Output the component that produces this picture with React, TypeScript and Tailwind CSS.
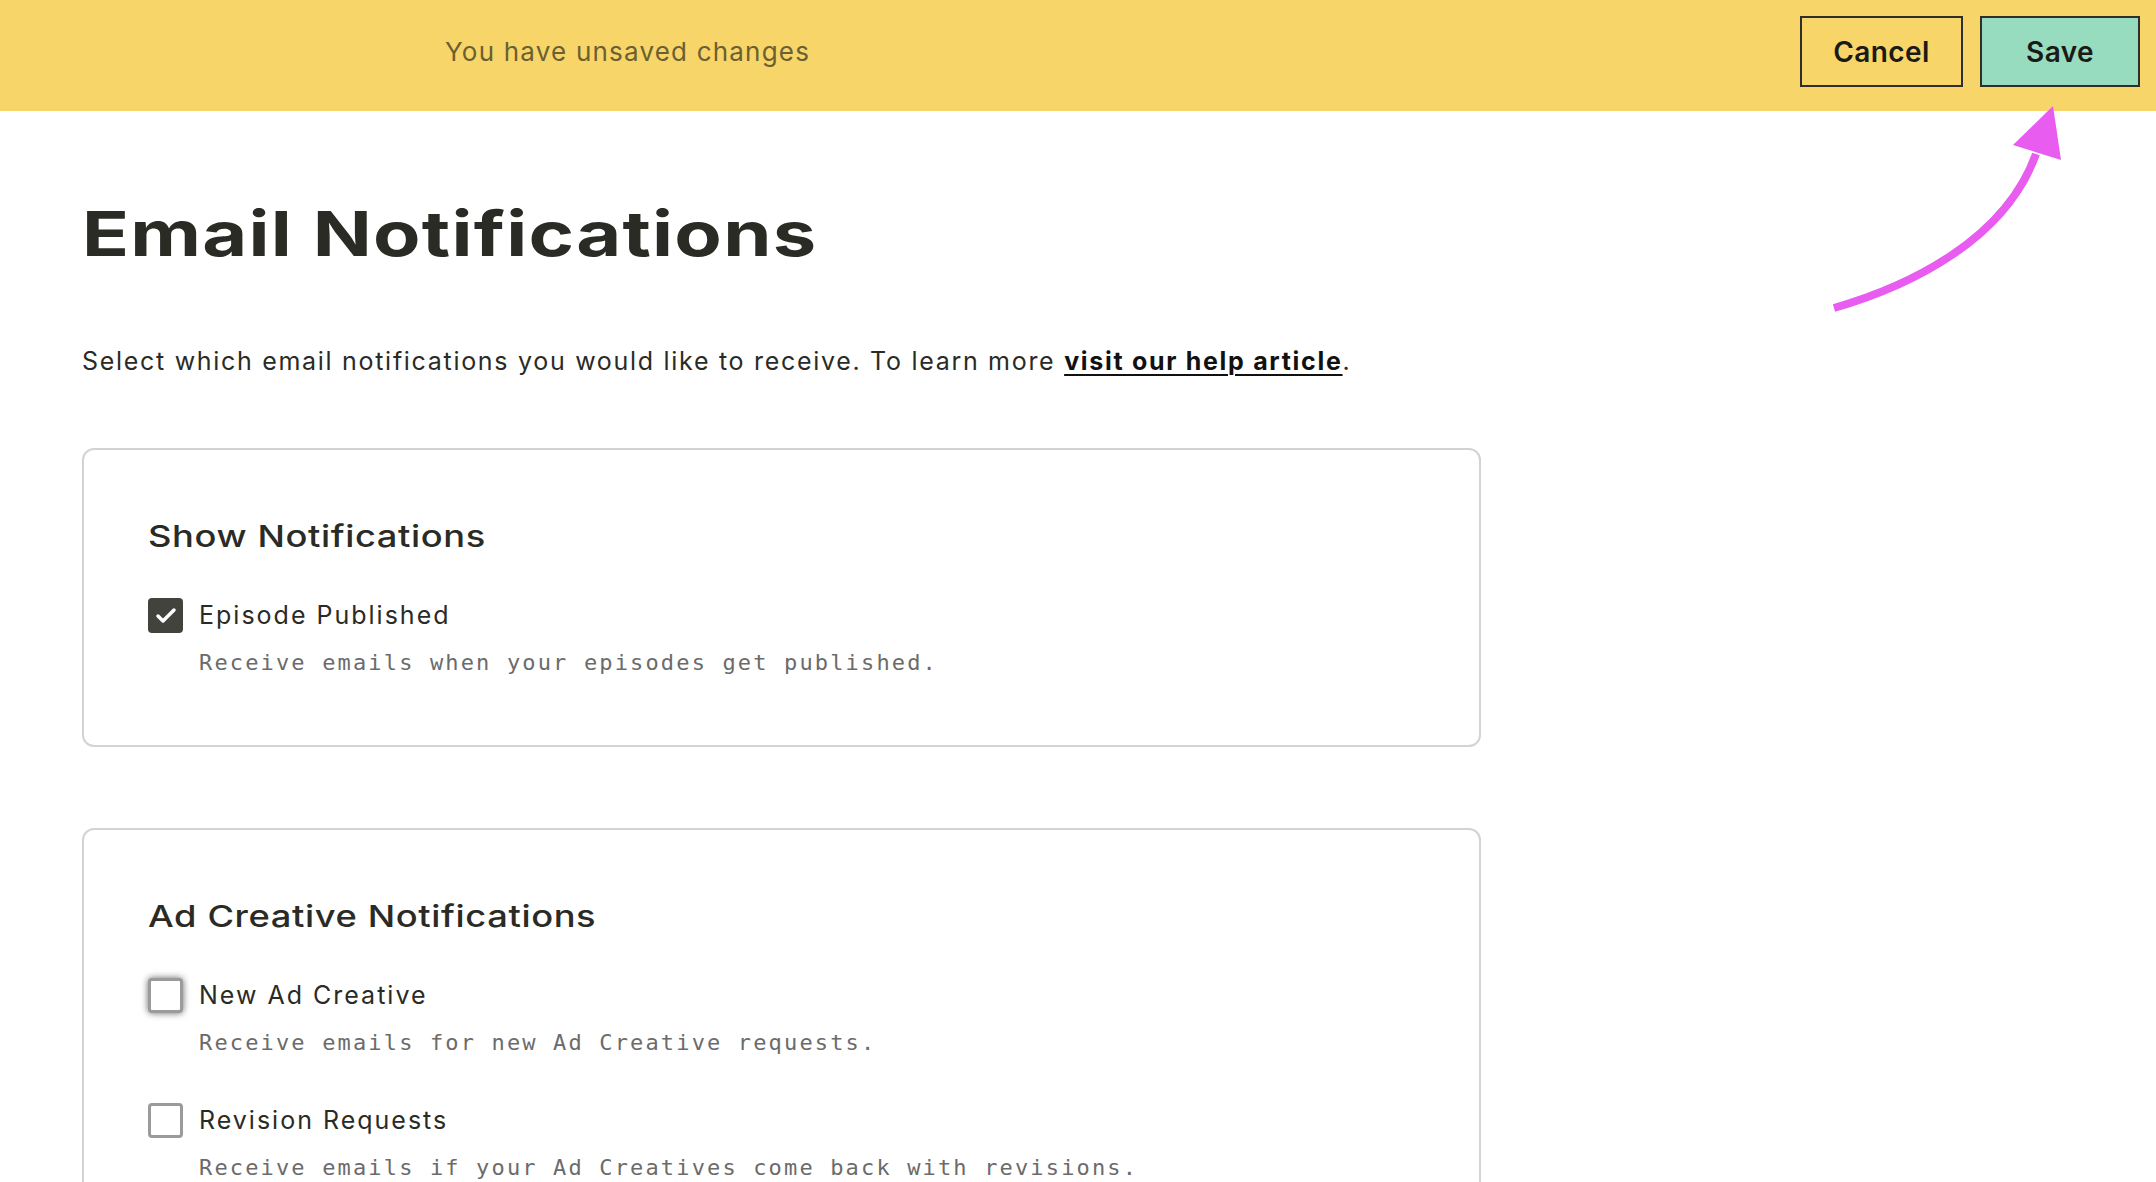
import { Check } from "lucide-react";

type Item = {
  label: string;
  description: string;
  checked: boolean;
  focused?: boolean;
};

type Section = {
  title: string;
  items: Item[];
};

const sections: Section[] = [
  {
    title: "Show Notifications",
    items: [
      {
        label: "Episode Published",
        description: "Receive emails when your episodes get published.",
        checked: true,
      },
    ],
  },
  {
    title: "Ad Creative Notifications",
    items: [
      {
        label: "New Ad Creative",
        description: "Receive emails for new Ad Creative requests.",
        checked: false,
        focused: true,
      },
      {
        label: "Revision Requests",
        description: "Receive emails if your Ad Creatives come back with revisions.",
        checked: false,
      },
    ],
  },
];

function Checkbox({ checked, focused }: { checked: boolean; focused?: boolean }) {
  if (checked) {
    return (
      <span className="flex h-[35px] w-[35px] shrink-0 items-center justify-center rounded-[4px] bg-[#43433e]">
        <Check size={24} strokeWidth={3.5} className="text-white" />
      </span>
    );
  }
  return (
    <span
      className={
        "h-[35px] w-[35px] shrink-0 rounded-[4px] border-[3px] border-[#9b9b9b] bg-white" +
        (focused ? " shadow-[0_0_7px_rgba(0,0,0,0.6)]" : "")
      }
    />
  );
}

function SaveArrow() {
  return (
    <svg
      className="pointer-events-none absolute left-[1800px] top-[90px]"
      width="300"
      height="240"
      viewBox="0 0 300 240"
      fill="none"
    >
      <path d="M34 218 C110 196 205 150 236 64" stroke="#e85cf0" strokeWidth="8" />
      <polygon points="253,16 213,55 261,70" fill="#e85cf0" />
    </svg>
  );
}

export default function App() {
  return (
    <div className="relative min-h-screen overflow-hidden bg-white font-['Inter',sans-serif] text-[#2b2b26]">
      <header className="flex h-[111px] items-start bg-[#f8d568] pl-[445px] pr-[16px] pt-[16px]">
        <div className="flex h-[71px] flex-1 items-center">
          <span className="text-[26px] tracking-[1.2px] text-[#6b6032]">You have unsaved changes</span>
        </div>
        <div className="flex gap-[17px]">
          <button className="h-[71px] w-[163px] border-2 border-[#2e2e2a] text-[28px] font-semibold tracking-[0.4px] text-[#1a1a17]">
            Cancel
          </button>
          <button className="h-[71px] w-[160px] border-2 border-[#2e2e2a] bg-[#98dcbf] text-[28px] font-semibold tracking-[0.4px] text-[#1a1a17]">
            Save
          </button>
        </div>
      </header>

      <main className="px-[82px] pt-[92px]">
        <h1 className="origin-left scale-x-[1.25] text-[62px] font-bold leading-[62px] tracking-[1px]">
          Email Notifications
        </h1>

        <p className="mt-[80px] text-[25px] leading-[32px] tracking-[1.7px]">
          Select which email notifications you would like to receive. To learn more{" "}
          <a href="#" className="font-bold text-[#111] underline decoration-2 underline-offset-4">
            visit our help article
          </a>
          .
        </p>

        <div className="mt-[71px] flex w-[1399px] flex-col gap-[81px]">
          {sections.map((section) => (
            <section
              key={section.title}
              className="rounded-[12px] border-2 border-[#d3d3d3] px-[64px] pb-[68px] pt-[68px]"
            >
              <h2 className="origin-left scale-x-[1.21] text-[30px] font-medium leading-[36px] tracking-[0.5px]">
                {section.title}
              </h2>
              <div className="mt-[44px] flex flex-col gap-[46px]">
                {section.items.map((item) => (
                  <div key={item.label}>
                    <label className="flex items-center gap-[16px]">
                      <Checkbox checked={item.checked} focused={item.focused} />
                      <span className="text-[25px] leading-[35px] tracking-[2px]">{item.label}</span>
                    </label>
                    <p className="ml-[51px] mt-[16px] font-['DejaVu_Sans_Mono',monospace] text-[22px] leading-[28px] tracking-[2.15px] text-[#6b6b6b]">
                      {item.description}
                    </p>
                  </div>
                ))}
              </div>
            </section>
          ))}
        </div>
      </main>

      <SaveArrow />
    </div>
  );
}
